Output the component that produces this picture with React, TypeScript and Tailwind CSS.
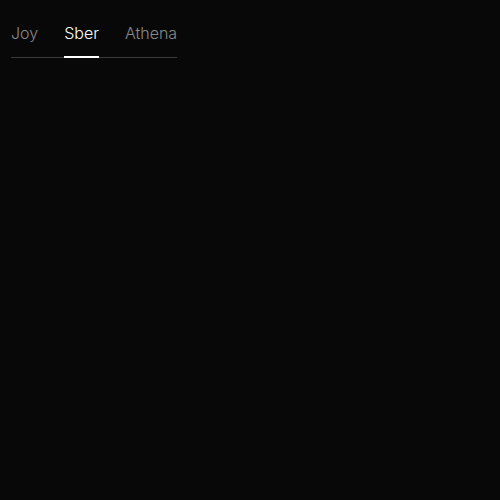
const tabs = ['Joy', 'Sber', 'Athena'];

export default function App() {
  const active = 'Sber';
  return (
    <div className="min-h-screen w-full bg-[#080808] px-[11px] pt-[21px]" style={{ fontFamily: 'Inter, "Noto Sans", sans-serif' }}>
      <div className="inline-flex gap-[26px] border-b border-[#3a3a3a]">
        {tabs.map((t) => (
          <button
            key={t}
            className={`relative pb-[13px] text-[16px] font-light leading-[22px] ${t === active ? 'text-white' : 'text-[#8a8a8a]'}`}
          >
            {t}
            {t === active && <span className="absolute left-0 right-0 -bottom-px h-[2px] bg-white" />}
          </button>
        ))}
      </div>
    </div>
  );
}
